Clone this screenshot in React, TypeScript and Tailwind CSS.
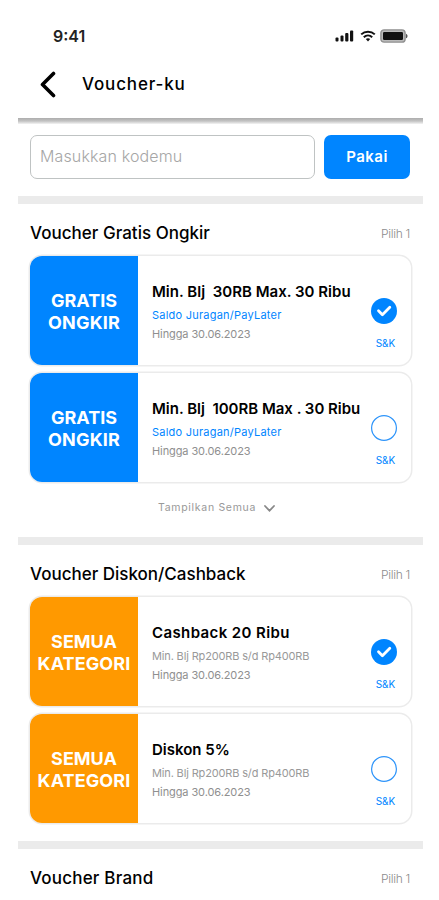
import { useState } from "react";
import clsx from "clsx";

type Voucher = {
  id: string;
  title: string;
  titleClass: string;
  info: string;
  infoClass: string;
};

const ongkirVouchers: Voucher[] = [
  {
    id: "ongkir-30",
    title: "Min. Blj  30RB Max. 30 Ribu",
    titleClass: "tracking-[0.02px]",
    info: "Saldo Juragan/PayLater",
    infoClass: "text-[#0085ff] tracking-[0.23px]",
  },
  {
    id: "ongkir-100",
    title: "Min. Blj  100RB Max . 30 Ribu",
    titleClass: "tracking-[-0.01px]",
    info: "Saldo Juragan/PayLater",
    infoClass: "text-[#0085ff] tracking-[0.23px]",
  },
];

const diskonVouchers: Voucher[] = [
  {
    id: "cashback-20",
    title: "Cashback 20 Ribu",
    titleClass: "tracking-[0.4px]",
    info: "Min. Blj Rp200RB s/d Rp400RB",
    infoClass: "text-[#999999] tracking-[-0.15px]",
  },
  {
    id: "diskon-5",
    title: "Diskon 5%",
    titleClass: "tracking-[0px]",
    info: "Min. Blj Rp200RB s/d Rp400RB",
    infoClass: "text-[#999999] tracking-[-0.15px]",
  },
];

function StatusBar() {
  return (
    <div className="flex h-[54px] items-end justify-between pl-[35px] pr-[15px]">
      <span className="mb-[8px] text-[16px] font-semibold leading-[20px] text-[#222]">9:41</span>
      <div className="mb-[10px] flex h-4 items-center">
        <svg width="19" height="12" viewBox="0 0 19 12" fill="#111">
          <rect x="0.5" y="7.5" width="3" height="4" rx="1" />
          <rect x="5.5" y="5.5" width="3" height="6" rx="1" />
          <rect x="10.2" y="3" width="3.2" height="8.5" rx="1" />
          <rect x="15" y="0.5" width="3.2" height="11" rx="1" />
        </svg>
        <svg className="ml-[6px]" width="16" height="12" viewBox="0 0 16 12" fill="none" stroke="#111" strokeWidth="2">
          <path d="M1.2 4.4C5 .7 11 .7 14.8 4.4" />
          <path d="M3.8 7.3C6.2 5 9.8 5 12.2 7.3" />
          <path d="M5.8 9 8 11.6 10.2 9C9 8 7 8 5.8 9Z" fill="#111" stroke="none" />
        </svg>
        <svg className="ml-[4px]" width="28" height="14" viewBox="0 0 28 14">
          <rect x="0.9" y="0.9" width="24.2" height="12.2" rx="3.2" fill="#bbb" stroke="#8f8f8f" strokeWidth="1.4" />
          <rect x="3" y="3" width="20" height="8" rx="1.2" fill="#111" />
          <path d="M26 4.7C28 5.5 28 8.5 26 9.3Z" fill="#555" />
        </svg>
      </div>
    </div>
  );
}

function Header() {
  return (
    <header>
      <div className="flex h-[64px] items-center pb-1 pl-[22px]">
        <button aria-label="Kembali">
          <svg width="16" height="27" viewBox="0 0 16 27" fill="none" stroke="#000" strokeWidth="3.6" strokeLinecap="round" strokeLinejoin="round">
            <path d="M13.5 2.5 2.5 13.5 13.5 24.5" />
          </svg>
        </button>
        <h1 className="ml-[26px] text-[17px] font-medium leading-[24px] tracking-[0.85px]">Voucher-ku</h1>
      </div>
      <div className="h-[6px] bg-linear-to-b from-[#adadad] via-[#c2c2c2] to-[#f4f4f4]" />
    </header>
  );
}

function SectionTitle({ title, className }: { title: string; className: string }) {
  return (
    <div className="flex h-[52px] items-center justify-between pl-3 pr-[12px] pt-[7px]">
      <h2 className={clsx("whitespace-nowrap text-[17px] font-medium", className)}>{title}</h2>
      <span className="mr-[1px] text-[12px] font-light tracking-[-0.3px] text-[#8c8c8c]">Pilih 1</span>
    </div>
  );
}

function VoucherCard({
  voucher,
  label,
  panelClass,
  checked,
  onSelect,
}: {
  voucher: Voucher;
  label: [string, string];
  panelClass: string;
  checked: boolean;
  onSelect: () => void;
}) {
  return (
    <div className="flex h-[109px] w-[381px] overflow-hidden rounded-xl bg-white shadow-[0_0_0_1.5px_#ebebeb]">
      <div className={clsx("flex w-[108px] shrink-0 flex-col items-center justify-center pt-[2px] text-[18px] font-bold leading-[22px] text-white", panelClass)}>
        <span>{label[0]}</span>
        <span className={label[1] === "KATEGORI" ? "tracking-[0.1px]" : "tracking-[0.15px]"}>{label[1]}</span>
      </div>
      <div className="w-[219px] shrink-0 whitespace-pre pl-[14px] pt-[24px]">
        <h3 className={clsx("text-[15px] font-semibold leading-[24px]", voucher.titleClass)}>{voucher.title}</h3>
        <p className={clsx("mt-[1px] text-[11px] leading-[20px]", voucher.infoClass)}>{voucher.info}</p>
        <p className="text-[11px] leading-[19px] tracking-[-0.1px] text-[#8f8f8f]">Hingga 30.06.2023</p>
      </div>
      <div className="flex w-[54px] shrink-0 flex-col items-center pt-[42px]">
        <button aria-label={voucher.title} aria-pressed={checked} onClick={onSelect}>
          <svg width="28" height="26" viewBox="0 0 28 26" fill="none">
            {checked ? (
              <>
                <circle cx="14" cy="13" r="13" fill="#0085ff" />
                <path d="M8.5 12.8 12.4 16.7 19.8 9.3" stroke="#fff" strokeWidth="2.8" strokeLinecap="round" strokeLinejoin="round" />
              </>
            ) : (
              <circle cx="14" cy="13" r="12.4" stroke="#2d94fa" strokeWidth="1.2" />
            )}
          </svg>
        </button>
        <span className="ml-[3px] mt-[12px] text-[10px] leading-[14px] text-[#0085ff]">S&amp;K</span>
      </div>
    </div>
  );
}

function Divider() {
  return <div className="h-2 shrink-0 bg-[#ebebeb]" />;
}

export default function App() {
  const [ongkir, setOngkir] = useState("ongkir-30");
  const [diskon, setDiskon] = useState("cashback-20");
  const [code, setCode] = useState("");

  return (
    <main className="h-[900px] w-[439px] overflow-hidden bg-white pl-[18px] font-['Inter',sans-serif] text-black">
      <div className="w-[405px]">
        <StatusBar />
        <Header />

        <div className="flex h-[72px] gap-[9px] pl-3 pt-[11px]">
          <input
            value={code}
            onChange={(e) => setCode(e.target.value)}
            placeholder="Masukkan kodemu"
            className="h-[44px] w-[285px] rounded-[7px] border border-[#bfc3c3] px-[9px] pb-[2px] text-[16px] font-light tracking-[0.13px] text-black outline-none placeholder:text-[#a6a6a6]"
          />
          <button className="h-[44px] w-[86px] rounded-[7px] bg-[#0085ff] text-[15px] font-semibold tracking-[0.5px] text-white">
            Pakai
          </button>
        </div>

        <Divider />
        <section>
          <SectionTitle title="Voucher Gratis Ongkir" className="tracking-[0.02px]" />
          <div className="flex flex-col gap-2 pl-3">
            {ongkirVouchers.map((voucher) => (
              <VoucherCard
                key={voucher.id}
                voucher={voucher}
                label={["GRATIS", "ONGKIR"]}
                panelClass="bg-[#0085ff]"
                checked={ongkir === voucher.id}
                onSelect={() => setOngkir(voucher.id)}
              />
            ))}
          </div>
          <button className="flex h-[55px] w-full items-center pb-[3px] pl-[140px] text-[#999]">
            <span className="text-[10.5px] leading-[16px] tracking-[0.7px]">Tampilkan Semua</span>
            <svg className="ml-2" width="11" height="7" viewBox="0 0 11 7" fill="none" stroke="#888" strokeWidth="1.8" strokeLinecap="round">
              <path d="M1 1 5.5 5.7 10 1" />
            </svg>
          </button>
        </section>

        <Divider />
        <section className="pb-[18px]">
          <SectionTitle title="Voucher Diskon/Cashback" className="tracking-[0px]" />
          <div className="flex flex-col gap-2 pl-3">
            {diskonVouchers.map((voucher) => (
              <VoucherCard
                key={voucher.id}
                voucher={voucher}
                label={["SEMUA", "KATEGORI"]}
                panelClass="bg-[#ff9900]"
                checked={diskon === voucher.id}
                onSelect={() => setDiskon(voucher.id)}
              />
            ))}
          </div>
        </section>

        <Divider />
        <SectionTitle title="Voucher Brand" className="tracking-[0.2px]" />
      </div>
    </main>
  );
}
